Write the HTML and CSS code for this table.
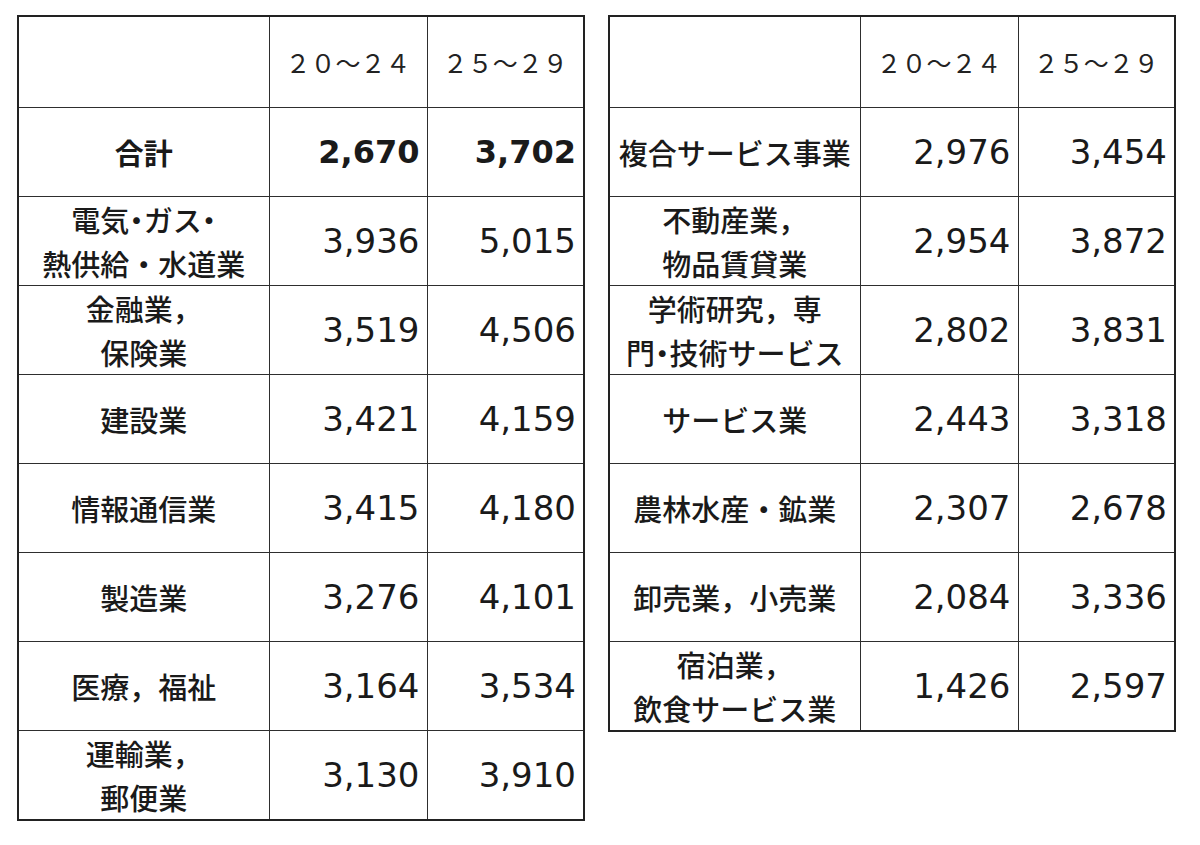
FILE: index.html
```html
<!DOCTYPE html>
<html lang="ja">
<head>
<meta charset="utf-8">
<title>業種別 年収</title>
<link rel="stylesheet" href="styles.css">
</head>
<body>
<div class="page">
  <table class="grid">
    <colgroup><col class="c-name"><col class="c-num"><col class="c-num2"></colgroup>
    <tr class="head"><th></th><th>２０～２４</th><th>２５～２９</th></tr>
    <tr class="total"><td class="name">合計</td><td class="num">2,670</td><td class="num">3,702</td></tr>
    <tr><td class="name">電気<span class="dot">・</span>ガス<span class="dot">・</span><br>熱供給・水道業</td><td class="num">3,936</td><td class="num">5,015</td></tr>
    <tr><td class="name">金融業，<br>保険業</td><td class="num">3,519</td><td class="num">4,506</td></tr>
    <tr><td class="name">建設業</td><td class="num">3,421</td><td class="num">4,159</td></tr>
    <tr><td class="name">情報通信業</td><td class="num">3,415</td><td class="num">4,180</td></tr>
    <tr><td class="name">製造業</td><td class="num">3,276</td><td class="num">4,101</td></tr>
    <tr><td class="name">医療，福祉</td><td class="num">3,164</td><td class="num">3,534</td></tr>
    <tr><td class="name">運輸業，<br>郵便業</td><td class="num">3,130</td><td class="num">3,910</td></tr>
  </table>
  <table class="grid">
    <colgroup><col class="c-name"><col class="c-num"><col class="c-num2"></colgroup>
    <tr class="head"><th></th><th>２０～２４</th><th>２５～２９</th></tr>
    <tr><td class="name">複合サービス事業</td><td class="num">2,976</td><td class="num">3,454</td></tr>
    <tr><td class="name">不動産業，<br>物品賃貸業</td><td class="num">2,954</td><td class="num">3,872</td></tr>
    <tr><td class="name">学術研究，専<br>門<span class="dot">・</span>技術サービス</td><td class="num">2,802</td><td class="num">3,831</td></tr>
    <tr><td class="name">サービス業</td><td class="num">2,443</td><td class="num">3,318</td></tr>
    <tr><td class="name">農林水産・鉱業</td><td class="num">2,307</td><td class="num">2,678</td></tr>
    <tr><td class="name">卸売業，小売業</td><td class="num">2,084</td><td class="num">3,336</td></tr>
    <tr><td class="name">宿泊業，<br>飲食サービス業</td><td class="num">1,426</td><td class="num">2,597</td></tr>
  </table>
</div>
</body>
</html>
```

FILE: styles.css
```css
html, body {
  margin: 0;
  padding: 0;
  background: #ffffff;
}

.page {
  display: flex;
  align-items: flex-start;
  gap: 23px;
  padding: 15px 0 0 17px;
}

.grid {
  border-collapse: collapse;
  table-layout: fixed;
  width: 566px;
  border: 2px solid #222222;
  color: #1a1a1a;
}

.c-name { width: 251px; }
.c-num { width: 158px; }
.c-num2 { width: 157px; }

.grid th,
.grid td {
  border: 1.5px solid #2e2e2e;
  padding: 0;
}

.head th {
  height: 90px;
  font-family: "Noto Sans CJK JP", sans-serif;
  font-weight: 400;
  font-size: 25px;
  text-align: center;
  color: #222222;
}

.grid td {
  height: 88px;
  vertical-align: middle;
}

.name {
  font-family: "Noto Sans CJK JP", sans-serif;
  font-weight: 500;
  font-size: 29px;
  line-height: 44px;
  text-align: center;
  white-space: nowrap;
}

.dot {
  font-feature-settings: "halt";
}

.num {
  font-family: "DejaVu Sans", "Liberation Sans", sans-serif;
  font-size: 34px;
  text-align: right;
  padding-right: 7px !important;
}

.total .name {
  font-weight: 700;
}

.total .num {
  font-weight: 700;
  font-size: 32px;
}
```
